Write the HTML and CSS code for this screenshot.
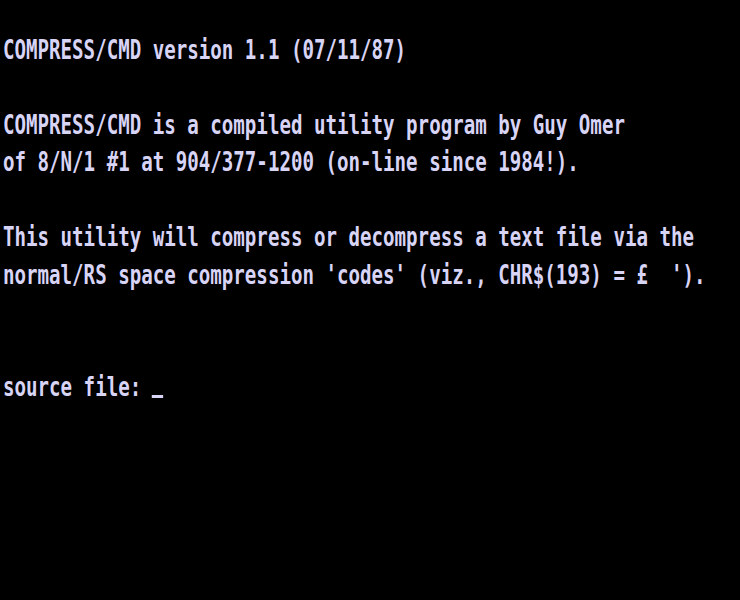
FILE: index.html
```html
<!DOCTYPE html>
<html>
<head>
<meta charset="utf-8">
<link rel="stylesheet" href="styles.css">
</head>
<body>
<div class="crt">
  <div class="screen">
    <div class="row"> </div>
    <div class="row">COMPRESS/CMD version 1.1 (07/11/87)</div>
    <div class="row"> </div>
    <div class="row">COMPRESS/CMD is a compiled utility program by Guy Omer</div>
    <div class="row">of 8/N/1 #1 at 904/377-1200 (on-line since 1984!).</div>
    <div class="row"> </div>
    <div class="row">This utility will compress or decompress a text file via the</div>
    <div class="row">normal/RS space compression 'codes' (viz., CHR$(193) = £  ').</div>
    <div class="row"> </div>
    <div class="row"> </div>
    <div class="row">source file: <span class="cursor"></span></div>
  </div>
</div>
</body>
</html>
```
FILE: styles.css
```css
html, body {
  margin: 0;
  padding: 0;
  background: #000;
  width: 740px;
  height: 600px;
  overflow: hidden;
}
.crt {
  width: 740px;
  height: 600px;
  background: #000;
  overflow: hidden;
}
.screen {
  width: 1040px;
  transform: scaleX(0.7085);
  transform-origin: 0 0;
  margin-top: -7px;
  margin-left: 3px;
  font-family: "DejaVu Sans Mono", monospace;
  font-weight: bold;
  font-size: 27px;
  color: #d8d4f6;
}
.row {
  height: 37.5px;
  line-height: 37.5px;
  white-space: pre;
}
.cursor {
  display: inline-block;
  width: 16px;
  height: 3px;
  background: #d8d4f6;
  vertical-align: -2px;
  margin-left: -1px;
}
```
